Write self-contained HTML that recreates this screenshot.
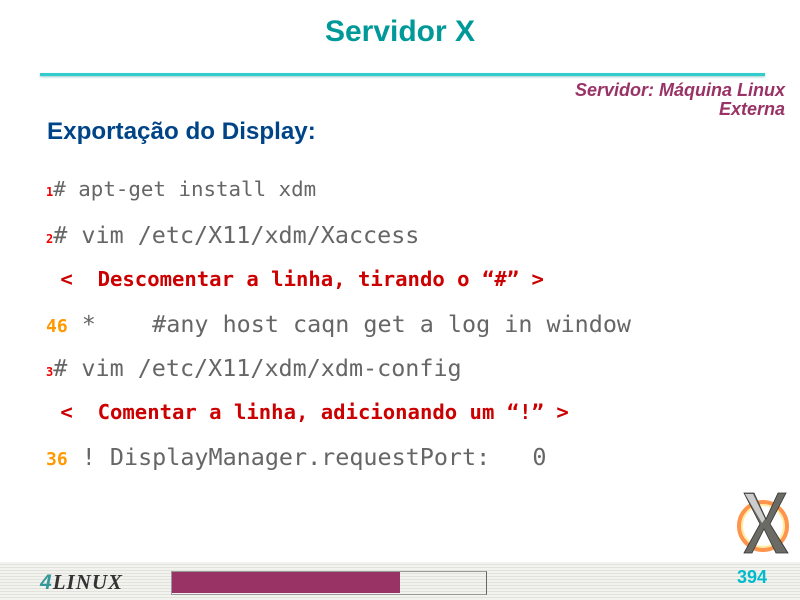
<!DOCTYPE html>
<html><head><meta charset="utf-8"><style>
body{margin:0;width:800px;height:600px;position:relative;overflow:hidden;background:#fff;font-family:"Liberation Sans",sans-serif}
.t{position:absolute;left:0;width:800px;text-align:center;top:15px;font-size:30px;font-weight:bold;color:#009999}
.hr{position:absolute;left:40px;top:73px;width:725px;height:3px;background:#33cccc;box-shadow:0 1px 2px #9cc}
.sub{position:absolute;right:15px;top:81px;text-align:right;font-size:18px;font-weight:bold;font-style:italic;color:#993366;line-height:19px}
.h{position:absolute;left:47px;top:118px;font-size:24.2px;font-weight:bold;color:#004488}
.m{position:absolute;font-family:"DejaVu Sans Mono",monospace;font-size:23.4px;color:#666;white-space:pre}
.n{color:#e00;font-size:12px;font-weight:bold}
.o{color:#f90;font-size:18px;font-weight:bold}
.r{color:#c00;font-weight:bold;font-size:20.6px}
.bar{position:absolute;left:0;top:562px;width:800px;height:38px;background:repeating-linear-gradient(#f2f2ee 0 2px,#e2e2dc 2px 3px)}
</style></head><body>
<div class="t">Servidor X</div>
<div class="hr"></div>
<div class="sub">Servidor: Máquina Linux<br>Externa</div>
<div class="h">Exportação do Display:</div>
<div class="m" style="left:46px;top:177px;font-size:20.8px"><span class="n">1</span># apt-get install xdm</div>
<div class="m" style="left:46px;top:221px"><span class="n">2</span># vim /etc/X11/xdm/Xaccess</div>
<div class="m r" style="left:48px;top:267px"> &lt;  Descomentar a linha, tirando o “#” &gt;</div>
<div class="m" style="left:46px;top:310px"><span class="o">46</span> *    #any host caqn get a log in window</div>
<div class="m" style="left:46px;top:354px"><span class="n">3</span># vim /etc/X11/xdm/xdm-config</div>
<div class="m r" style="left:48px;top:400px"> &lt;  Comentar a linha, adicionando um “!” &gt;</div>
<div class="m" style="left:46px;top:443px"><span class="o">36</span> ! DisplayManager.requestPort:   0</div>
<svg style="position:absolute;left:732px;top:490px" width="68" height="68" viewBox="0 0 68 68">
<circle cx="31" cy="36" r="24" fill="none" stroke="#f60" stroke-width="4" opacity=".7"/>
<circle cx="31" cy="36" r="21" fill="none" stroke="#fd6" stroke-width="2" opacity=".6"/>
<path d="M12 3h10l12 26 12-26h8l-16 31 18 29h-12l-12-24-12 24h-8l16-29z" fill="#6b6b66" stroke="#333" stroke-width=".8"/>
<path d="M13 4h8l12 25-3 4z" fill="#ccc"/>
</svg>
<div class="bar"></div>
<div style="position:absolute;left:40px;top:570px;font-size:21px;font-weight:bold;font-style:italic;color:#333;letter-spacing:1px;font-family:'Liberation Serif',serif"><span style="color:#399;font-family:'Liberation Sans',sans-serif">4</span>LINUX</div>
<div style="position:absolute;left:171px;top:571px;width:314px;height:22px;border:1px solid #999;border-right-color:#666"></div>
<div style="position:absolute;left:172px;top:572px;width:228px;height:21px;background:#993366"></div>
<div style="position:absolute;left:737px;top:567px;font-size:18px;font-weight:bold;color:#00bbcc">394</div>
</body></html>
